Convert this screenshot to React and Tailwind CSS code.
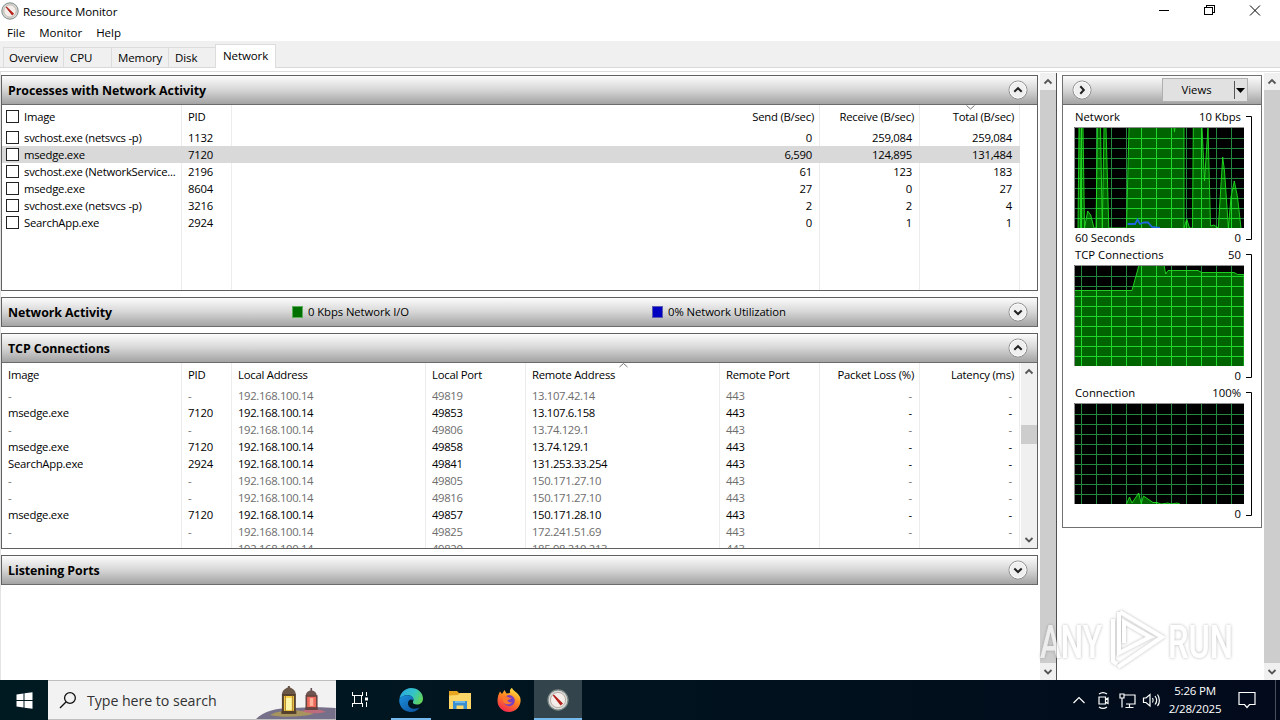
import React from 'react';

const processes = [
  { image: 'svchost.exe (netsvcs -p)', pid: '1132', send: '0', receive: '259,084', total: '259,084' },
  { image: 'msedge.exe', pid: '7120', send: '6,590', receive: '124,895', total: '131,484', selected: true },
  { image: 'svchost.exe (NetworkService...', pid: '2196', send: '61', receive: '123', total: '183' },
  { image: 'msedge.exe', pid: '8604', send: '27', receive: '0', total: '27' },
  { image: 'svchost.exe (netsvcs -p)', pid: '3216', send: '2', receive: '2', total: '4' },
  { image: 'SearchApp.exe', pid: '2924', send: '0', receive: '1', total: '1' },
];

// closed connections have no image / pid and are greyed out
const connections = [
  { port: '49819', remote: '13.107.42.14' },
  { image: 'msedge.exe', pid: '7120', port: '49853', remote: '13.107.6.158' },
  { port: '49806', remote: '13.74.129.1' },
  { image: 'msedge.exe', pid: '7120', port: '49858', remote: '13.74.129.1' },
  { image: 'SearchApp.exe', pid: '2924', port: '49841', remote: '131.253.33.254' },
  { port: '49805', remote: '150.171.27.10' },
  { port: '49816', remote: '150.171.27.10' },
  { image: 'msedge.exe', pid: '7120', port: '49857', remote: '150.171.28.10' },
  { port: '49825', remote: '172.241.51.69' },
  { port: '49820', remote: '185.98.210.213' },
];

const tabs = [
  { name: 'Overview', width: 'w-[60px]', pad: 'pl-[5px]' },
  { name: 'CPU', width: 'w-[48px]', pad: 'pl-[6px]' },
  { name: 'Memory', width: 'w-[57px]', pad: 'pl-[6px]' },
  { name: 'Disk', width: 'w-[47px]', pad: 'pl-[6px]' },
];

const charts = [
  {
    id: 'net',
    title: 'Network',
    max: '10 Kbps',
    footer: '60 Seconds',
    line: 'M4 101L5 0H6L6.8 101L7.5 0H9L10.5 101L13.7 84L16.7 88L20 101H22L23.5 0H26.5L28.3 101L30 0H32L34.8 101H52.5L55 0H100L100.5 5L101 0H110V101L112.7 92L115.5 101H118.5L119.3 0H128L130.5 54L134 0L136.5 99L140 98L144.3 101L148.7 30L150.5 44L154.4 101L157 70L160.3 54L163.5 70L167 101',
    extra: 'M53.5 97L61 97L63.5 92.5L66 97L70 95.5L74 95.5L78 100L86 101',
  },
  {
    id: 'tcp',
    title: 'TCP Connections',
    max: '50',
    line: 'M0 101V25.5H58L65 0H90L91.7 9L94 5.5H124L127.7 7.5H160L163.7 9.5H170V101',
  },
  {
    id: 'conn',
    title: 'Connection',
    max: '100%',
    line: 'M52.5 101L55.5 94L58 100L64.7 90L67.2 100.5L69.5 93L79 99.5L83 99.5L87 101L94 100L97 101L103 100L106 101',
  },
];

const gridPath =
  'M7.5 1V101M22.5 1V101M37.5 1V101M52.5 1V101M67.5 1V101M82.5 1V101M97.5 1V101M112.5 1V101M127.5 1V101M142.5 1V101M157.5 1V101M1 11.5H170M1 21.5H170M1 31.5H170M1 41.5H170M1 51.5H170M1 61.5H170M1 71.5H170M1 81.5H170M1 91.5H170';

const Checkbox = () => <span className="h-[13px] w-[13px] shrink-0 border border-[#222] bg-white" />;

const Chevron = ({ dir }) => (
  <svg width="20" height="20" viewBox="0 0 20 20" className="shrink-0">
    <circle cx="10" cy="10" r="9" fill="#efefef" stroke="#8c8c8c" />
    <circle cx="10" cy="10" r="8" fill="none" stroke="#fafafa" />
    {dir === 'up' && <path d="M6.3 11.7L10 8.2L13.7 11.7" fill="none" stroke="#222" strokeWidth="2" />}
    {dir === 'down' && <path d="M6.3 8.5L10 12L13.7 8.5" fill="none" stroke="#222" strokeWidth="2" />}
    {dir === 'right' && <path d="M8.3 6.3L11.8 10L8.3 13.7" fill="none" stroke="#222" strokeWidth="2" />}
  </svg>
);

const ScrollArrow = ({ down }) => (
  <svg width="16" height="17" viewBox="0 0 16 17" className="shrink-0 bg-[#f0f0f0]">
    <path d={down ? 'M4.5 7L8 10.5L11.5 7' : 'M4.5 10.5L8 7L11.5 10.5'} fill="none" stroke="#555" strokeWidth="1.8" />
  </svg>
);

const SortMark = ({ up }) => (
  <svg width="9" height="5" viewBox="0 0 9 5" className="absolute top-0 left-1/2 -ml-1">
    <path d={up ? 'M0.5 4L4.5 0.5L8.5 4' : 'M0.5 0.5L4.5 4L8.5 0.5'} fill="none" stroke="#777" />
  </svg>
);

const PanelHeader = ({ title, dir, children }) => (
  <div className="flex h-[29px] shrink-0 items-center border-b border-[#6b6b6b] bg-linear-to-b from-[#fcfcfc] via-[#d6d6d6] to-[#a3a3a3] pr-[9px] pl-[6px]">
    <span className="w-[284px] shrink-0 text-[12.4px] font-bold tracking-[-0.06px]">{title}</span>
    <div className="flex min-w-0 flex-1 items-center pb-px">{children}</div>
    <Chevron dir={dir} />
  </div>
);

const Legend = ({ color, label }) => (
  <span className="flex w-[360px] shrink-0 items-center gap-[5px] tracking-[-0.08px]">
    <span className={`h-[12px] w-[11px] border ${color}`} />
    {label}
  </span>
);

const ProcessTable = () => (
  <div className="relative flex-1 tracking-[-0.24px]">
    {/* column rules run to the bottom of the panel */}
    <div className="absolute inset-0 flex">
      <div className="w-[180px] border-r border-[#ececec]" />
      <div className="w-[50px] border-r border-[#ececec]" />
      <div className="w-[588px] border-r border-[#ececec]" />
      <div className="w-[100px] border-r border-[#ececec]" />
      <div className="w-[100px] border-r border-[#ececec]" />
    </div>
    <div className="relative flex h-[24px] items-center pb-px">
      <div className="flex w-[180px] items-center gap-[5px] pl-[4px]"><Checkbox />Image</div>
      <div className="w-[50px] pl-[6px]">PID</div>
      <div className="w-[588px] pr-[6px] text-right">Send (B/sec)</div>
      <div className="w-[100px] pr-[6px] text-right">Receive (B/sec)</div>
      <div className="relative flex h-full w-[100px] items-center justify-end pr-[6px]">
        <SortMark />
        Total (B/sec)
      </div>
    </div>
    {processes.map((p, i) => (
      <div key={i} className={`relative flex h-[17px] w-[1018px] items-center ${p.selected ? 'bg-[#d9d9d9]' : ''}`}>
        <div className="flex w-[180px] items-center gap-[5px] pl-[4px] whitespace-nowrap"><Checkbox />{p.image}</div>
        <div className="w-[50px] pl-[6px]">{p.pid}</div>
        <div className="w-[588px] pr-[8px] text-right">{p.send}</div>
        <div className="w-[100px] pr-[8px] text-right">{p.receive}</div>
        <div className="w-[100px] pr-[8px] text-right">{p.total}</div>
      </div>
    ))}
  </div>
);

const ConnectionTable = () => (
  <div className="flex min-h-0 flex-1">
    <div className="relative w-[1019px] overflow-hidden tracking-[-0.24px]">
      <div className="absolute inset-0 flex">
        <div className="w-[180px] border-r border-[#ececec]" />
        <div className="w-[50px] border-r border-[#ececec]" />
        <div className="w-[194px] border-r border-[#ececec]" />
        <div className="w-[100px] border-r border-[#ececec]" />
        <div className="w-[194px] border-r border-[#ececec]" />
        <div className="w-[100px] border-r border-[#ececec]" />
        <div className="w-[100px] border-r border-[#ececec]" />
        <div className="w-[100px] border-r border-[#ececec]" />
      </div>
      <div className="relative flex h-[24px] items-center pb-px">
        <div className="w-[180px] pl-[6px]">Image</div>
        <div className="w-[50px] pl-[6px]">PID</div>
        <div className="w-[194px] pl-[6px]">Local Address</div>
        <div className="w-[100px] pl-[6px]">Local Port</div>
        <div className="relative flex h-full w-[194px] items-center pl-[6px]">
          <SortMark up />
          Remote Address
        </div>
        <div className="w-[100px] pl-[6px]">Remote Port</div>
        <div className="w-[100px] pr-[6px] text-right">Packet Loss (%)</div>
        <div className="w-[100px] pr-[6px] text-right">Latency (ms)</div>
      </div>
      {connections.map((c) => (
        <div key={c.port} className={`relative flex h-[17px] items-center ${c.image ? 'text-black' : 'text-[#6d6d6d]'}`}>
          <div className="w-[180px] pl-[6px]">{c.image || '-'}</div>
          <div className="w-[50px] pl-[6px]">{c.pid || '-'}</div>
          <div className="w-[194px] pl-[6px] tracking-[-0.34px]">192.168.100.14</div>
          <div className="w-[100px] pl-[6px] tracking-[-0.34px]">{c.port}</div>
          <div className="w-[194px] pl-[6px] tracking-[-0.34px]">{c.remote}</div>
          <div className="w-[100px] pl-[6px]">443</div>
          <div className="w-[100px] pr-[8px] text-right">-</div>
          <div className="w-[100px] pr-[8px] text-right">-</div>
        </div>
      ))}
    </div>
    <div className="flex w-[16px] flex-col bg-[#f0f0f0]">
      <ScrollArrow />
      <div className="mt-[45px] mb-auto h-[19px] bg-[#cdcdcd]" />
      <ScrollArrow down />
    </div>
  </div>
);

const Chart = ({ chart }) => (
  <div className="flex h-[138px]">
    <div className="w-[170px]">
      <div className="flex h-[19px] items-center justify-between pr-[3px] pb-[3px] pl-px">
        <span>{chart.title}</span>
        <span>{chart.max}</span>
      </div>
      <svg width="170" height="101" viewBox="0 0 170 101" className="block">
        <defs>
          <clipPath id={chart.id}><path d={chart.line} /></clipPath>
        </defs>
        <rect width="170" height="101" fill="#000" />
        <path d={gridPath} stroke="#22873f" />
        <path d={chart.line} fill="#006400" />
        <path d={gridPath} stroke="#1ed82c" clipPath={`url(#${chart.id})`} />
        <path d={chart.line} fill="none" stroke="#22dd22" strokeWidth="0.9" />
        {chart.extra && <path d={chart.extra} fill="none" stroke="#1f66e0" strokeWidth="1.8" />}
        <path d="M0.5 101V0.5H170" fill="none" stroke="#8f8f8f" />
      </svg>
      <div className="flex h-[18px] items-center justify-between pr-[3px] pl-px">
        <span>{chart.footer}</span>
        <span>0</span>
      </div>
    </div>
    <svg width="9" height="138" viewBox="0 0 9 138">
      <path d="M2 8.5H7.5V131.5H2" fill="none" stroke="#000" />
    </svg>
  </div>
);

const ResmonIcon = ({ size }) => (
  <svg width={size} height={size} viewBox="0 0 18 18">
    <circle cx="9" cy="9" r="8.2" fill="#d8dcda" stroke="#7f8a86" />
    <circle cx="9" cy="9" r="6.2" fill="#f4eeea" stroke="#b9a8a0" strokeWidth="0.8" />
    <path d="M5.2 5L11.2 12.6L12.2 11.8Z" fill="#b3231c" stroke="#b3231c" strokeWidth="1.2" />
  </svg>
);

const Lanterns = () => (
  <svg width="80" height="38" viewBox="0 0 80 38" className="mt-px self-end">
    <path d="M0 38C8 30 20 27 38 27C52 26 68 26 80 27V38Z" fill="#77708a" />
    <path d="M14 34C26 28 44 28 58 33C44 36 26 37 14 34Z" fill="#b7a24e" opacity=".75" />
    <path d="M46 30C54 27 66 28 70 31C62 33 52 33 46 30Z" fill="#d06a78" opacity=".8" />
    <g transform="translate(1 2)">
      <path d="M32 3V6" stroke="#5b4a3c" strokeWidth="2" />
      <path d="M25 12C25 7 29 5 32 4C35 5 39 7 39 12Z" fill="#6b5748" />
      <rect x="26" y="12" width="12" height="17" fill="#ffd447" stroke="#54402c" strokeWidth="2" />
      <rect x="29" y="15" width="6" height="12" fill="#fff6a8" />
      <path d="M28.5 12V29M35.5 12V29" stroke="#8a6426" strokeWidth=".7" />
      <rect x="24.5" y="28" width="15" height="3" fill="#54402c" />
      <path d="M54.5 5V8" stroke="#5b4a4c" strokeWidth="1.6" />
      <path d="M49 13C49 9 52 8 54.5 7C57 8 60 9 60 13Z" fill="#6d5552" />
      <rect x="49.5" y="13" width="10.5" height="12" fill="#ee6a5c" stroke="#654441" strokeWidth="1.6" />
      <rect x="53" y="15" width="3.5" height="8" fill="#ffb19a" />
      <rect x="48.5" y="24.5" width="12.5" height="2.5" fill="#654441" />
    </g>
  </svg>
);

const EdgeIcon = () => (
  <svg width="26" height="26" viewBox="0 0 26 26">
    <defs>
      <linearGradient id="edgeTop" x1="0" y1="0.2" x2="1" y2="0.6">
        <stop offset="0" stopColor="#2aa5e0" />
        <stop offset=".55" stopColor="#34c4c8" />
        <stop offset="1" stopColor="#62d45a" />
      </linearGradient>
      <linearGradient id="edgeLow" x1="0" y1="0" x2="1" y2="1">
        <stop offset="0" stopColor="#1b8fdc" />
        <stop offset="1" stopColor="#0c4f9c" />
      </linearGradient>
    </defs>
    <path d="M1.5 12C2 6 7 1 13 1C20 1 25 6 25 11.5C25 15.5 22 17.5 19 17.5C16 17.5 14.5 16.5 15 15C16.5 12 14.5 8.5 10.5 8.3C6 8 2.5 10 1.5 12Z" fill="url(#edgeTop)" />
    <path d="M1.2 13C2 9.5 6 8 10 8.3C14 8.6 16 11 15.2 13.5C13.5 11 9.5 13 10 17C10.5 21.5 16 23 21.5 20.5C19.5 23.5 16.5 25 13 25C6 25 1 19.5 1.2 13Z" fill="url(#edgeLow)" />
  </svg>
);

const FolderIcon = () => (
  <svg width="24" height="22" viewBox="0 0 24 22">
    <path d="M1 2H9L11 4H22V19H1Z" fill="#e8a520" />
    <path d="M1 6.5L10 6L12 4H23V20H1Z" fill="#fcd768" />
    <path d="M5 12H19V20H15.5V16.5H8.5V20H5Z" fill="#3b8ed0" />
    <path d="M7 12H17V14H7Z" fill="#6fb8ea" />
  </svg>
);

const FirefoxIcon = () => (
  <svg width="26" height="26" viewBox="0 0 26 26">
    <defs>
      <linearGradient id="fox" x1="0.8" y1="0" x2="0.3" y2="1">
        <stop offset="0" stopColor="#fff04a" />
        <stop offset=".45" stopColor="#ff8a1f" />
        <stop offset="1" stopColor="#f2264f" />
      </linearGradient>
    </defs>
    <path d="M4 4.5L6 7L8.5 3L10.5 6.5L14 6C13.5 3.5 14.5 1.8 16 0.8C16.5 3.5 22 5.5 24 10C26.5 17 21 25 13 25C6.5 25 1.5 20 1.5 14C1.5 10 2.5 7 4 4.5Z" fill="url(#fox)" />
    <circle cx="13.2" cy="13.6" r="5.6" fill="#7a3fc0" />
    <path d="M6.5 9.5C9 8.5 11 9 12.5 10.5L15.5 11C14.5 12.5 12.5 12.5 11.5 13C11.5 15 14 16 16 15C14 18.5 8 18 7.2 14Z" fill="#ff7a2a" />
  </svg>
);

const TaskViewIcon = () => (
  <svg width="18" height="18" viewBox="0 0 18 18" fill="none" stroke="#fff">
    <path d="M1 4.5H12M1 12.5H12M3.5 4.5V12.5M10.5 4.5V12.5M1.5 1V4.5M11.5 1V4.5M1.5 12.5V16M11.5 12.5V16M15.5 1V5M15.5 11V16" />
    <path d="M14 6.5H17V9.5H14Z" fill="#fff" stroke="none" />
  </svg>
);

// translucent logo laid over the bottom right of the window
const Watermark = () => (
  <svg width="200" height="72" viewBox="0 0 200 72" className="absolute top-[605px] left-[1036px]">
    <defs>
      <filter id="glow" x="-10%" y="-10%" width="120%" height="120%">
        <feDropShadow dx="0" dy="0" stdDeviation="1.8" floodColor="#666" floodOpacity=".75" />
      </filter>
    </defs>
    <g filter="url(#glow)" opacity=".65" fill="#fff">
      <text x="4" y="53" textLength="62" lengthAdjust="spacingAndGlyphs" fontSize="47" fontWeight="500" fontFamily="Roboto">ANY</text>
      <text x="132" y="53" textLength="65" lengthAdjust="spacingAndGlyphs" fontSize="47" fontWeight="500" fontFamily="Roboto">RUN</text>
      <path d="M77 14V56L81 59M84 7L126 32L82 62M83 7V48L114 32L88 17V38" fill="none" stroke="#fff" strokeWidth="4" />
    </g>
  </svg>
);

const Taskbar = () => (
  <div className="flex h-[40px] bg-linear-to-r from-[#001a22] via-[#00131e] to-[#020a1b] text-white">
    <div className="flex w-[48px] items-center justify-center">
      <svg width="17" height="17" viewBox="0 0 17 17" fill="#fff">
        <path d="M0.5 2.5L7.5 1.5V8H0.5ZM8.5 1.3L16.5 0.2V8H8.5ZM0.5 9H7.5V15.5L0.5 14.5ZM8.5 9H16.5V16.8L8.5 15.7Z" />
      </svg>
    </div>
    <div className="flex w-[288px] items-center border-t border-b border-[#bfbfbf] bg-[#f2f2f2] pl-[11px] text-[#333]">
      <svg width="18" height="18" viewBox="0 0 18 18" fill="none" stroke="#111" strokeWidth="1.3">
        <circle cx="11" cy="7" r="5.4" />
        <path d="M7 11L1 17" />
      </svg>
      <span className="w-[180px] pl-[10px] text-[14.2px] tracking-[-0.05px]">Type here to search</span>
      <Lanterns />
    </div>
    <div className="flex w-[48px] items-center justify-center"><TaskViewIcon /></div>
    <div className="flex w-[54px] justify-center">
      <div className="flex w-[40px] items-center justify-center border-b-2 border-[#76b9ed] pt-[2px]"><EdgeIcon /></div>
    </div>
    <div className="flex w-[44px] items-center justify-center"><FolderIcon /></div>
    <div className="flex w-[52px] items-center justify-center pl-px"><FirefoxIcon /></div>
    <div className="flex w-[48px] items-center justify-center border-b-2 border-[#76b9ed] bg-[#33444d] pt-[2px]"><ResmonIcon size={22} /></div>
    <div className="flex flex-1 items-center justify-end">
      <svg width="88" height="20" viewBox="0 0 88 20" fill="none" stroke="#fff" strokeWidth="1.2">
        <path d="M1.5 13L7 7.5L12.5 13" />
        <path d="M27 7H33.5V14H27ZM33.5 9.5L36 8V13.5L33.5 12M27 4C29.5 2.2 32.5 2.2 35 4M27 17C29.5 18.8 32.5 18.8 35 17" />
        <path d="M52 5H63V14H54M57.5 14V17.5M53.5 17.5H61.5M48 4H52V8H48ZM50 8V17.5" />
        <path d="M71.5 8H74L78 4.5V16L74 12.5H71.5ZM80.5 8C81.5 9.5 81.5 11 80.5 12.5M83 6C85 8.5 85 12 83 14.5M85.5 4.5C88 8 88 13 85.5 16" />
      </svg>
      <div className="w-[70px] text-center text-[11.5px] leading-[18px] tracking-[-0.2px]">
        <div>5:26 PM</div>
        <div>2/28/2025</div>
      </div>
      <svg width="18" height="18" viewBox="0 0 18 18" fill="none" stroke="#fff" strokeWidth="1.2" className="mr-[19px] ml-[8px]">
        <path d="M1 1.5H17V13.5H11.5L9 16.5L6.5 13.5H1Z" />
      </svg>
      <div className="h-full w-[5px] border-l border-[#4a4f5c]" />
    </div>
  </div>
);

const App = () => {
  return (
    <div className="relative flex h-[720px] w-[1280px] flex-col overflow-hidden bg-white font-['Open_Sans',sans-serif] text-[11.3px] leading-[17px] text-black">
      {/* Title bar */}
      <div className="flex h-[22px] items-center justify-between pl-px">
        <div className="flex items-center gap-[4px] text-[11.5px] tracking-[-0.08px]">
          <ResmonIcon size={18} />
          <span>Resource Monitor</span>
        </div>
        <svg width="122" height="22" viewBox="0 0 122 22" fill="none" stroke="#000" shapeRendering="crispEdges">
          <path d="M1 10.5H11M46.5 7.5H54.5V14.5H46.5ZM48.5 7V5.5H56.5V12.5H55" />
          <path d="M92 5.5L102 15.5M102 5.5L92 15.5" shapeRendering="auto" />
        </svg>
      </div>

      {/* Menu */}
      <div className="flex h-[19px] shrink-0 items-center gap-[14px] pt-[2px] pl-[7px] text-[11.5px]">
        <span>File</span>
        <span>Monitor</span>
        <span>Help</span>
      </div>

      {/* Tabs */}
      <div className="flex h-[27px] shrink-0 items-end border-b border-[#d9d9d9] bg-[#f0f0f0] pl-[3px] text-[11.5px] tracking-[-0.1px]">
        {tabs.map((tab) => (
          <div key={tab.name} className={`h-[20px] border-t border-l border-[#dcdcdc] leading-[19px] ${tab.width} ${tab.pad}`}>
            {tab.name}
          </div>
        ))}
        <div className="-mb-px h-[24px] w-[61px] border border-b-0 border-[#dcdcdc] bg-white pl-[7px] leading-[22px]">Network</div>
      </div>
      <div className="h-[4px] shrink-0 border-b border-[#dcdcdc]" />

      {/* Content */}
      <div className="flex min-h-0 flex-1 border-l border-[#e3e3e3]">
        <div className="flex w-[1039px] flex-col gap-[6px] pt-[3px] pr-[2px]">
          <div className="flex h-[216px] flex-col border border-[#606060]">
            <PanelHeader title="Processes with Network Activity" dir="up" />
            <ProcessTable />
          </div>
          <div className="flex h-[30px] flex-col border border-b-0 border-[#606060]">
            <PanelHeader title="Network Activity" dir="down">
              <Legend color="border-[#5fae5f] bg-[#007000]" label="0 Kbps Network I/O" />
              <Legend color="border-[#5b5bb0] bg-[#0000c0]" label="0% Network Utilization" />
            </PanelHeader>
          </div>
          <div className="flex h-[216px] flex-col border border-[#606060]">
            <PanelHeader title="TCP Connections" dir="up" />
            <ConnectionTable />
          </div>
          <div className="flex h-[30px] flex-col border border-b-0 border-[#606060]">
            <PanelHeader title="Listening Ports" dir="down" />
          </div>
        </div>
        <div className="mt-px flex w-[17px] flex-col border-r border-[#505050]">
          <ScrollArrow />
          <div className="flex-1 bg-[#cdcdcd]" />
          <ScrollArrow down />
        </div>

        {/* Graphs */}
        <div className="flex-1 pt-[3px] pl-[5px]">
          <div className="h-[453px] w-[200px] border border-[#707070]">
            <div className="flex h-[29px] items-center justify-between border-b border-[#6b6b6b] bg-linear-to-b from-[#fcfcfc] via-[#d6d6d6] to-[#a3a3a3] pr-[13px] pl-[9px]">
              <Chevron dir="right" />
              <div className="flex h-[24px] w-[86px] items-center border border-[#b0b0b0] bg-[#e1e1e1]">
                <span className="w-[71px] pr-[4px] pb-px text-center">Views</span>
                <svg width="13" height="18" viewBox="0 0 13 18">
                  <path d="M0.5 0V18" stroke="#555" />
                  <path d="M2 7H11L6.5 12Z" />
                </svg>
              </div>
            </div>
            <div className="pt-[3px] pl-[11px]">
              {charts.map((chart) => (
                <Chart key={chart.id} chart={chart} />
              ))}
            </div>
          </div>
        </div>
        <div className="mt-px flex w-[16px] flex-col">
          <ScrollArrow />
          <div className="flex-1 bg-[#cdcdcd]" />
          <ScrollArrow down />
        </div>
      </div>

      <Taskbar />
      <Watermark />
    </div>
  );
};

export default App;
